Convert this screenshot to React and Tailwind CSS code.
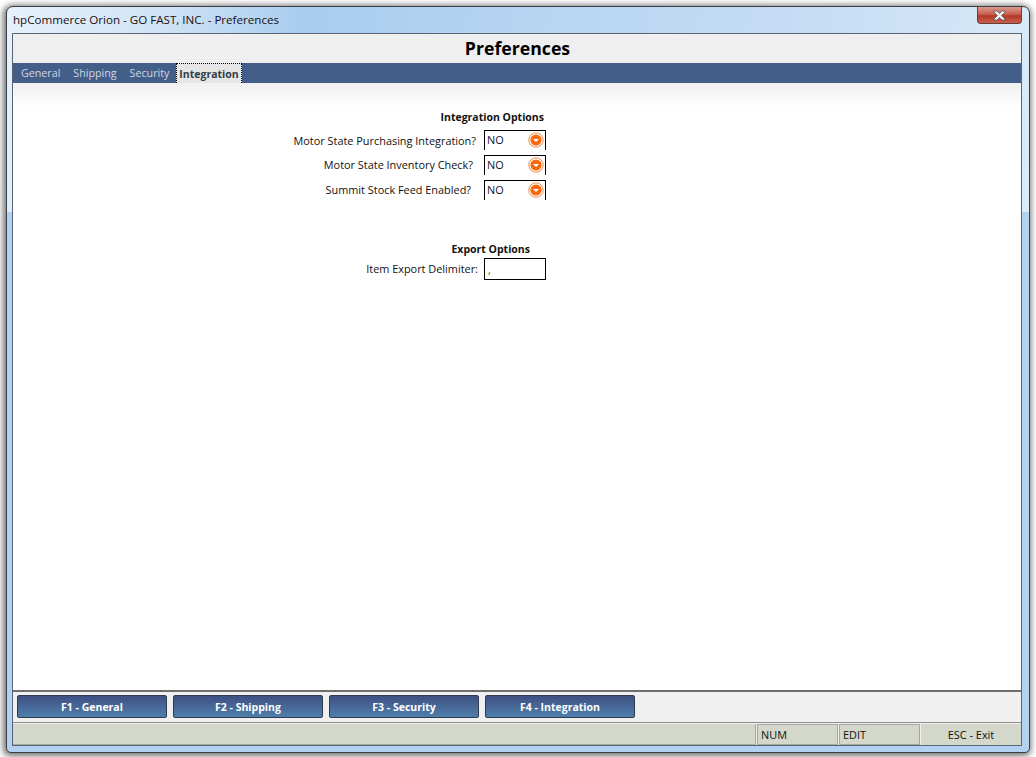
const tabs = ["General", "Shipping", "Security"];
const fkeys = ["F1 - General", "F2 - Shipping", "F3 - Security", "F4 - Integration"];

const rows = [
  { label: "Motor State Purchasing Integration?", pad: "pr-[8px] mt-[4px]" },
  { label: "Motor State Inventory Check?", pad: "pr-[11px] mt-[3px]" },
  { label: "Summit Stock Feed Enabled?", pad: "pr-[13px] mt-[3px]" },
];

const OrangeArrow = () => (
  <svg width="16" height="16" viewBox="0 0 16 16" className="shrink-0 mt-[1px]">
    <circle cx="8" cy="8" r="7.2" fill="#fff" stroke="#f08a45" strokeWidth="1" />
    <circle cx="8" cy="8" r="5.6" fill="#f86a10" />
    <path d="M5 7 H11 L8 10 Z" fill="#fff" />
  </svg>
);

const CloseIcon = () => (
  <svg width="13" height="11" viewBox="0 0 13 11">
    <path
      d="M1 1 H4 L6.500 3.500 L9 1 H12 V2 L8.500 5.500 L12 9 V10 H9 L6.500 7.500 L4 10 H1 V9 L4.500 5.500 L1 2 Z"
      fill="#f4f4f4"
      stroke="#555b66"
      strokeWidth="0.8"
    />
  </svg>
);

const SelectRow = ({ label, pad }) => (
  <div className="flex justify-end items-start h-[25px]">
    <span className={`${pad} leading-[14px]`}>{label}</span>
    <div className="w-[62px] h-[20px] border-x border-t border-black bg-white flex items-start justify-between pl-[2px] pr-[1px]">
      <span className="mt-[2px] leading-[14px] text-[#101030]">NO</span>
      <OrangeArrow />
    </div>
  </div>
);

export default function App() {
  return (
    <div className="w-[1036px] h-[757px] bg-white p-[6px] overflow-hidden font-['Open_Sans','Liberation_Sans',sans-serif] text-[10.9px] text-[#111]">
      <div className="w-[1024px] h-[747px] flex flex-col rounded-t-[7px] rounded-b-[5px] border border-[#3a3f47] pl-[5px] pr-[7px] pb-[6px] bg-[#b3d1f0] bg-[linear-gradient(100deg,#e6f1fb_0%,#cfe3f6_15%,#a9cdee_28%,#b7d4f1_50%,#c8dff5_80%,#dcebf9_100%)] bg-[length:100%_205px] bg-no-repeat shadow-[-1px_1px_6px_2px_rgba(0,0,0,0.55)]">
        {/* Title bar */}
        <div className="h-[26px] flex items-start justify-between shrink-0">
          <span className="ml-[1px] mt-[6px] text-[11.6px] leading-[14px] text-[#1a1010]">hpCommerce Orion - GO FAST, INC. - Preferences</span>
          <button className="w-[45px] h-[17px] rounded-b-[4px] border border-t-0 border-[#6b3a36] flex items-center justify-center bg-[linear-gradient(#d99a90_0%,#c9604f_45%,#b23a2a_55%,#c8604d_100%)]">
            <CloseIcon />
          </button>
        </div>

        {/* Client area */}
        <div className="flex-1 flex flex-col border border-[#5a6475] bg-white min-h-0">
          <div className="h-[29px] shrink-0 bg-[#efefef] flex items-center justify-center pl-[1px] text-[17.7px] font-bold text-black">
            Preferences
          </div>

          <div className="h-[20px] shrink-0 bg-[#445e8a] flex items-end gap-[1px] pl-[2px] text-[10.7px]">
            {tabs.map((t) => (
              <span key={t} className="px-[6px] h-[20px] leading-[20px] text-[#cfd6e2]">{t}</span>
            ))}
            <span className="h-[20px] px-[2px] leading-[20px] font-bold text-[10.5px] text-[#333a4a] bg-[#e6e6e6] border border-dotted border-black border-b-0">Integration</span>
          </div>

          <div className="flex-1 min-h-0 bg-[linear-gradient(#f0f0f0_0px,#ffffff_24px)] pt-[27px]">
            <div className="w-[533px]">
              <div className="h-[20px] text-right pr-[2px] font-bold leading-[14px] text-[10.5px]">Integration Options</div>
              {rows.map((r) => (
                <SelectRow key={r.label} label={r.label} pad={r.pad} />
              ))}
              <div className="h-[32px]" />
              <div className="h-[16px] text-right pr-[16px] font-bold leading-[14px] mt-[5px] text-[10.5px]">Export Options</div>
              <div className="flex justify-end items-start">
                <span className="pr-[6px] mt-[4px] leading-[14px]">Item Export Delimiter:</span>
                <div className="w-[62px] h-[22px] border border-black bg-white pl-[3px] pt-[4px] leading-[14px] text-[#555]">,</div>
              </div>
            </div>
          </div>

          {/* Function keys */}
          <div className="h-[32px] shrink-0 border-t-2 border-[#6e6e6e] bg-[#f0f0f0] flex items-start gap-[6px] pl-[4px] pt-[3px]">
            {fkeys.map((k) => (
              <button key={k} className="w-[150px] h-[23px] rounded-[2px] border border-[#2f3a4e] text-white font-bold text-[10.5px] leading-[14px] bg-[linear-gradient(#3f5083,#4f7fab)]">
                {k}
              </button>
            ))}
          </div>

          {/* Status bar */}
          <div className="h-[23px] shrink-0 border-t border-[#8c8c8c] bg-[#f0f0f0] pt-[1px] flex">
            <div className="flex-1 bg-[#d3d8ca] border-r border-b border-[#a5a8a0]" />
            <div className="w-[81px] ml-[1px] bg-[#d3d8ca] border border-[#a5a8a0] pl-[3px] leading-[20px]">NUM</div>
            <div className="w-[81px] ml-[1px] bg-[#d3d8ca] border border-[#a5a8a0] pl-[3px] leading-[20px]">EDIT</div>
            <div className="w-[100px] ml-[1px] bg-[#d3d8ca] text-center leading-[22px]">ESC - Exit</div>
          </div>
        </div>
      </div>
    </div>
  );
}
